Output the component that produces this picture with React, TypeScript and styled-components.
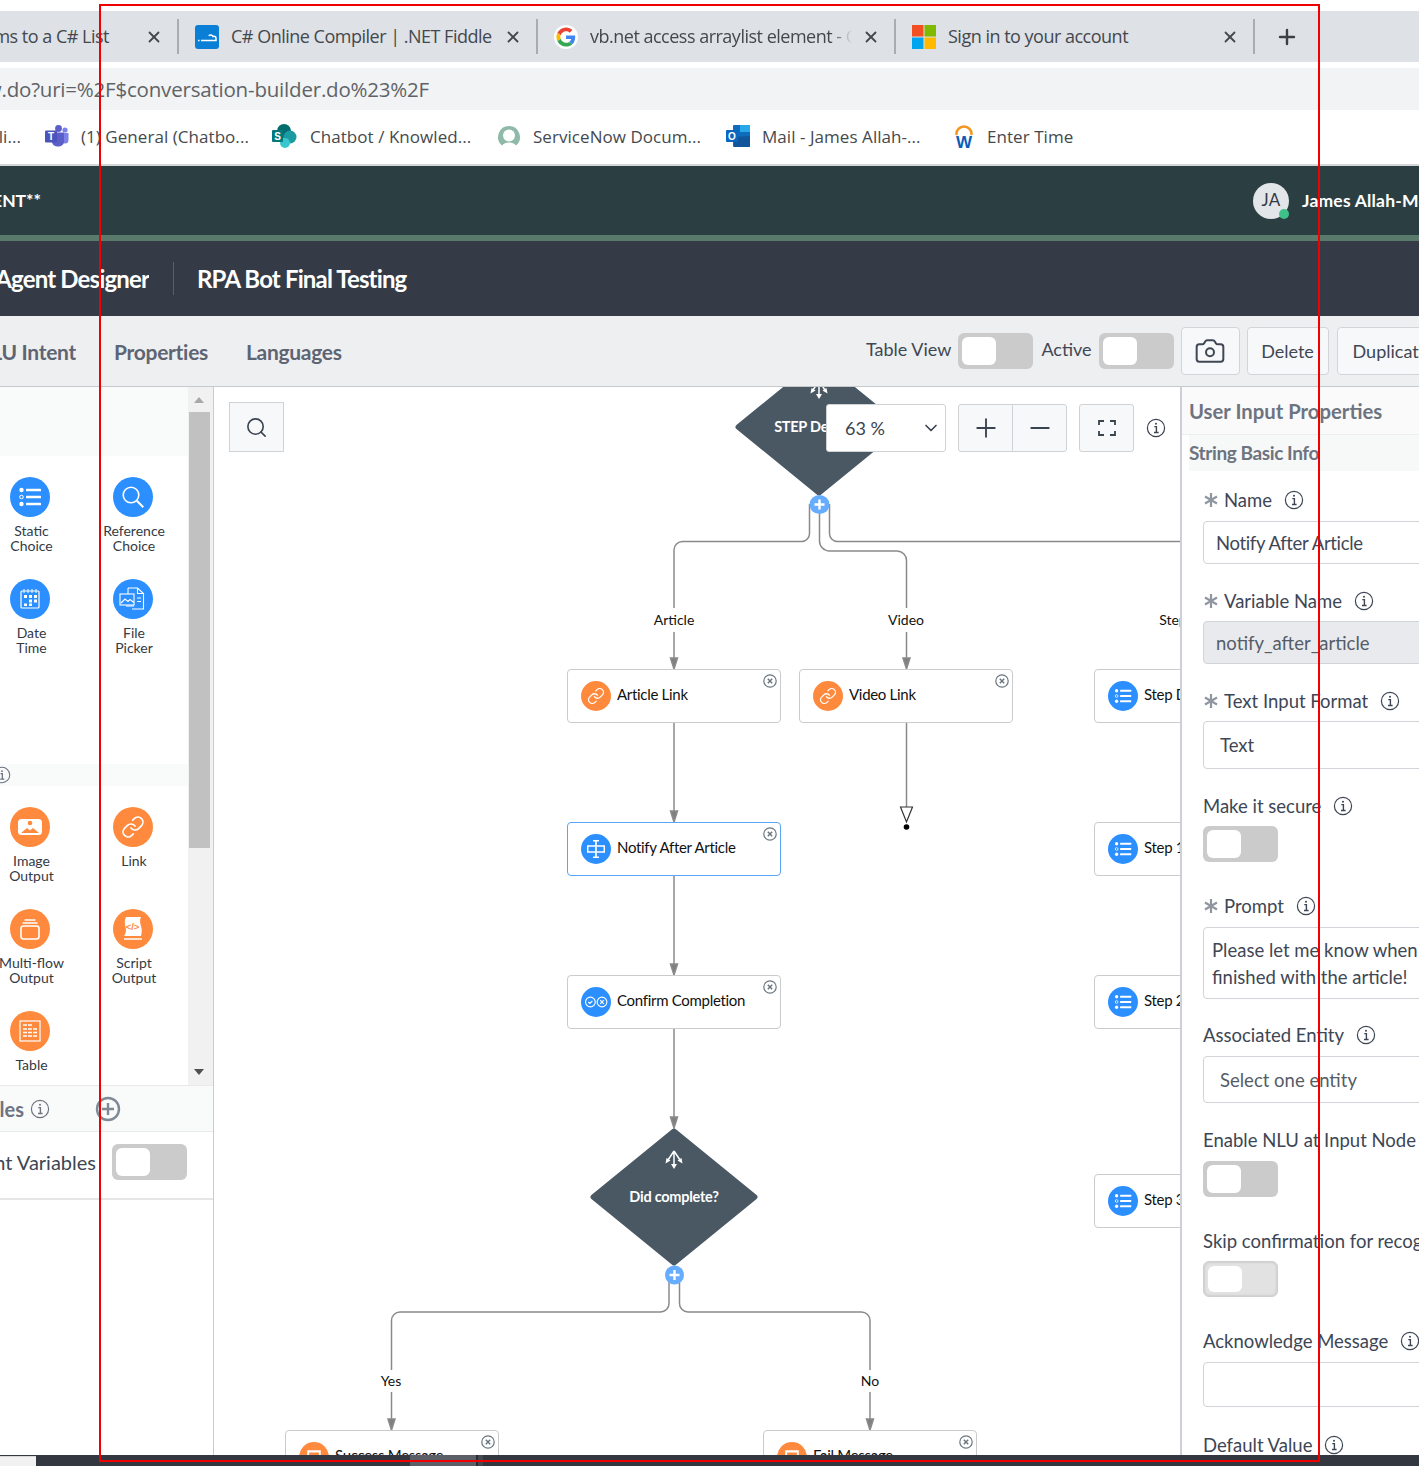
import React from "react";
import styled, { createGlobalStyle } from "styled-components";
import { X, Plus, Minus, Camera, Search, ChevronDown } from "lucide-react";

const GlobalStyle = createGlobalStyle`
  html, body { margin: 0; padding: 0; background: #fff; }
  body { font-family: "Lato", "Noto Sans", sans-serif; }
  * { box-sizing: border-box; }
`;

const Page = styled.div`
  position: relative;
  width: 1419px;
  height: 1466px;
  overflow: hidden;
  display: flex;
  flex-direction: column;
  background: #fff;
  padding-top: 11px;
`;

const RedFrame = styled.div`
  position: absolute;
  left: 99px;
  top: 4px;
  width: 1221px;
  height: 1458px;
  border: 2px solid #f00000;
  z-index: 50;
  pointer-events: none;
`;

/* ---------- browser chrome ---------- */
const TabBar = styled.div`
  display: flex;
  height: 51px;
  flex: none;
  background: #dee1e6;
  align-items: center;
  font-family: "Open Sans", "Noto Sans", sans-serif;
  font-size: 18px;
  color: #44484d;
`;
const Tab = styled.div<{ $w: number }>`
  flex: none;
  width: ${(p) => p.$w}px;
  height: 35px;
  display: flex;
  align-items: center;
  gap: 12px;
  padding: 0 14px 0 16px;
  border-right: 2px solid #a9adb2;
`;
const TabTitle = styled.span`
  flex: 1;
  min-width: 0;
  overflow: hidden;
  white-space: nowrap;
  letter-spacing: -0.5px;
  margin-top: -1px;
`;
const FadedTabTitle = styled(TabTitle)`
  mask-image: linear-gradient(to right, #000 92%, transparent 100%);
  margin-right: -2px;
`;
const ClippedTabTitle = styled(TabTitle)`
  display: flex;
  justify-content: flex-end;
  margin-left: -16px;
  padding-right: 24px;
`;
const NewTab = styled.div`
  margin-left: 20px;
  display: flex;
  color: #3c4043;
`;
const AddressBar = styled.div`
  flex: none;
  margin-top: 6px;
  height: 42px;
  background: #f1f3f4;
  display: flex;
  align-items: center;
  font-family: "Open Sans", "Noto Sans", sans-serif;
  font-size: 20.5px;
  letter-spacing: -0.2px;
  color: #5f6368;
`;
const AddressText = styled.div`
  width: 429px;
  display: flex;
  justify-content: flex-end;
  overflow: hidden;
  white-space: nowrap;
`;
const Bookmarks = styled.div`
  flex: none;
  height: 54px;
  padding-bottom: 2px;
  display: grid;
  grid-template-columns: 45px 227px 225px 229px 227px 1fr;
  align-items: center;
  font-family: "Open Sans", "Noto Sans", sans-serif;
  font-size: 17px;
  letter-spacing: 0.05px;
  color: #45494e;
  white-space: nowrap;
`;
const BookmarkClip = styled.div`
  width: 21px;
  display: flex;
  justify-content: flex-end;
  overflow: hidden;
`;
const Bookmark = styled.div`
  display: flex;
  align-items: center;
  gap: 12px;
`;
const ChromeRule = styled.div`
  flex: none;
  height: 2px;
  background: #d4d6d8;
`;

/* ---------- application header ---------- */
const AppHeader = styled.div`
  flex: none;
  height: 69px;
  background: #2b3f42;
  display: flex;
  align-items: center;
  justify-content: space-between;
  color: #fff;
  font-size: 17.5px;
  font-weight: 700;
  white-space: nowrap;
`;
const HeaderClip = styled.div`
  width: 41px;
  display: flex;
  justify-content: flex-end;
  overflow: hidden;
`;
const UserBlock = styled.div`
  width: 166px;
  display: flex;
  align-items: center;
  gap: 13px;
  letter-spacing: 0.2px;
  overflow: hidden;
`;
const Avatar = styled.div`
  position: relative;
  flex: none;
  width: 36px;
  height: 36px;
  border-radius: 50%;
  background: #e3e6e8;
  color: #333a44;
  font-weight: 400;
  font-size: 17px;
  padding-bottom: 2px;
  display: flex;
  align-items: center;
  justify-content: center;
`;
const StatusDot = styled.span`
  position: absolute;
  right: 0;
  bottom: 0;
  width: 10px;
  height: 10px;
  border-radius: 50%;
  background: #3fc28a;
`;
const GreenRule = styled.div`
  flex: none;
  height: 6px;
  background: #5a7b6b;
`;
const TitleBar = styled.div`
  flex: none;
  height: 75px;
  background: #343b47;
  display: flex;
  align-items: center;
  color: #fff;
  font-size: 24px;
  font-weight: 700;
  letter-spacing: -0.85px;
  white-space: nowrap;
`;
const TitleClip = styled.div`
  width: 149px;
  display: flex;
  justify-content: flex-end;
  overflow: hidden;
`;
const TitleDivider = styled.span`
  width: 1px;
  height: 33px;
  background: #54616c;
  margin: 0 23px 0 24px;
`;

/* ---------- tabs + actions ---------- */
const ToolRow = styled.div`
  flex: none;
  height: 71px;
  background: #eeeff1;
  border-bottom: 1px solid #c6cacd;
  display: flex;
  align-items: center;
  justify-content: space-between;
  white-space: nowrap;
`;
const NavTabs = styled.nav`
  display: flex;
  gap: 38px;
  align-items: center;
  font-size: 21px;
  font-weight: 700;
  letter-spacing: -0.3px;
  color: #5d6573;
`;
const NavClip = styled.div`
  width: 76px;
  display: flex;
  justify-content: flex-end;
  overflow: hidden;
`;
const Actions = styled.div`
  width: 553px;
  flex: none;
  display: flex;
  align-items: center;
  gap: 7px;
  font-size: 18px;
  color: #3f4754;
`;
const ActionLabel = styled.span`
  margin-top: -4px;
`;
const ActiveLabel = styled(ActionLabel)`
  margin-left: 1px;
`;
const Toggle = styled.span<{ $soft?: boolean }>`
  flex: none;
  display: block;
  width: 75px;
  height: 36px;
  border-radius: 6px;
  padding: 4px;
  background: ${(p) => (p.$soft ? "#e2e2e2" : "#cbcbcb")};
  border: ${(p) => (p.$soft ? "1px solid #cfcfcf" : "none")};
  box-shadow: ${(p) => (p.$soft ? "inset 0 0 3px #bbb" : "none")};
  &::before {
    content: "";
    display: block;
    width: 34px;
    height: 100%;
    border-radius: 6px;
    background: #fff;
  }
`;
const ActionButton = styled.button<{ $w: number }>`
  flex: none;
  width: ${(p) => p.$w}px;
  height: 48px;
  background: #f7f8f9;
  border: 1px solid #d2d5d8;
  border-radius: 4px;
  font: inherit;
  color: #3f4754;
  padding: 0;
  display: flex;
  align-items: center;
  justify-content: center;
`;
const DuplicateButton = styled(ActionButton)`
  justify-content: flex-start;
  padding-left: 15px;
  margin-left: 1px;
`;

/* ---------- workspace ---------- */
const Workspace = styled.div`
  flex: none;
  height: 1068px;
  display: grid;
  grid-template-columns: 214px 966px 239px;
  overflow: hidden;
`;
const LeftPanel = styled.aside`
  border-right: 1px solid #c8ccd0;
  display: flex;
  flex-direction: column;
  overflow: hidden;
`;
const Palette = styled.div`
  flex: none;
  height: 698px;
  display: flex;
`;
const PaletteBody = styled.div`
  width: 188px;
  flex: none;
  display: flex;
  flex-direction: column;
  overflow: hidden;
`;
const PaletteTop = styled.div`
  height: 69px;
  flex: none;
  background: #f9fafa;
`;
const PaletteGrid = styled.div<{ $h: number }>`
  flex: none;
  height: ${(p) => p.$h}px;
  width: 206px;
  margin-left: -21px;
  padding-top: 21px;
  display: grid;
  grid-template-columns: 102px 103px;
  grid-auto-rows: 102px;
  align-content: start;
`;
const PaletteDivider = styled.div`
  height: 22px;
  flex: none;
  background: #f9fafa;
  display: flex;
  align-items: center;
  margin-left: -7px;
  color: #6b7280;
`;
const PaletteItem = styled.div`
  display: flex;
  flex-direction: column;
  align-items: center;
  text-align: center;
  font-size: 14px;
  line-height: 15px;
  color: #333a44;
  gap: 6px;
`;
const PaletteText = styled.span`
  padding-left: 3px;
`;
const IconDisc = styled.span<{ $size: number; $color: string }>`
  flex: none;
  display: block;
  width: ${(p) => p.$size}px;
  height: ${(p) => p.$size}px;
  border-radius: 50%;
  background: ${(p) => p.$color};
  & > svg {
    display: block;
    width: 100%;
    height: 100%;
  }
`;
const Scrollbar = styled.div`
  width: 25px;
  flex: none;
  background: #f1f1f1;
  padding-right: 3px;
  display: flex;
  flex-direction: column;
  align-items: center;
  position: relative;
`;
const ScrollUp = styled.span`
  flex: none;
  height: 25px;
  display: flex;
  align-items: center;
  &::before {
    content: "";
    border-left: 5px solid transparent;
    border-right: 5px solid transparent;
    border-bottom: 6px solid #a8a8a8;
    margin-top: 1px;
  }
`;
const ScrollThumb = styled.span`
  flex: none;
  width: 21px;
  height: 436px;
  background: #c1c1c1;
`;
const ScrollDown = styled.span`
  flex: none;
  margin-top: auto;
  height: 27px;
  display: flex;
  align-items: center;
  &::before {
    content: "";
    border-left: 5px solid transparent;
    border-right: 5px solid transparent;
    border-top: 6px solid #505050;
  }
`;
const VarHeader = styled.div`
  flex: none;
  height: 47px;
  background: #f9fafa;
  border-top: 1px solid #e9e9e9;
  border-bottom: 1px solid #e9e9e9;
  display: flex;
  align-items: center;
  font-size: 20px;
  font-weight: 700;
  color: #6d7480;
  white-space: nowrap;
`;
const VarClip = styled.div`
  width: 24px;
  display: flex;
  justify-content: flex-end;
  overflow: hidden;
  margin-right: 6px;
`;
const AddVar = styled.span`
  display: flex;
  margin-left: 45px;
  color: #7f8a95;
`;
const VarRow = styled.div`
  flex: none;
  height: 68px;
  padding: 0 26px 6px 0;
  border-bottom: 2px solid #e6e6e6;
  display: flex;
  align-items: center;
  justify-content: space-between;
  font-size: 20px;
  color: #3d4654;
  white-space: nowrap;
`;
const VarRowClip = styled.div`
  width: 96px;
  display: flex;
  justify-content: flex-end;
  overflow: hidden;
`;

/* ---------- diagram ---------- */
const Canvas = styled.div`
  position: relative;
  overflow: hidden;
  background: #fff;
`;
const Wires = styled.svg`
  position: absolute;
  inset: 0;
  width: 966px;
  height: 1068px;
`;
const FlowNode = styled.div<{ $x: number; $y: number; $active?: boolean }>`
  position: absolute;
  left: ${(p) => p.$x - 214}px;
  top: ${(p) => p.$y - 387}px;
  width: 214px;
  height: 54px;
  background: #fff;
  border: 1px solid ${(p) => (p.$active ? "#5aa5f5" : "#c9cbcd")};
  border-radius: 4px;
  display: flex;
  align-items: center;
  gap: 6px;
  padding: 0 0 0 13px;
  font-size: 15px;
  color: #111;
  white-space: nowrap;
  letter-spacing: -0.3px;
`;
const NodeText = styled.span`
  margin-top: -5px;
`;
const NodeClose = styled.span`
  position: absolute;
  top: 4px;
  right: 3px;
  display: flex;
`;
const DiamondNode = styled.div<{ $x: number; $y: number }>`
  position: absolute;
  left: ${(p) => p.$x - 214}px;
  top: ${(p) => p.$y - 387}px;
  width: 168px;
  height: 138px;
  display: flex;
  align-items: center;
  justify-content: center;
  color: #fff;
  font-size: 14.5px;
  font-weight: 700;
  letter-spacing: -0.25px;
  white-space: nowrap;
`;
const DiamondShape = styled.svg`
  position: absolute;
  inset: 0;
  width: 168px;
  height: 138px;
`;
const DiamondLabel = styled.span`
  position: relative;
  margin-top: -2px;
`;
const EdgeLabel = styled.span<{ $x: number; $y: number }>`
  position: absolute;
  left: ${(p) => p.$x - 214}px;
  top: ${(p) => p.$y - 388}px;
  transform: translate(-50%, -50%);
  font-size: 14px;
  color: #111;
  white-space: nowrap;
`;
const CanvasButton = styled.div<{ $x: number; $y: number; $w: number }>`
  position: absolute;
  left: ${(p) => p.$x - 214}px;
  top: ${(p) => p.$y - 387}px;
  width: ${(p) => p.$w}px;
  height: 48px;
  background: #f7f8f9;
  border: 1px solid #cfd3d6;
  border-radius: 3px;
  display: flex;
  align-items: center;
  justify-content: center;
  color: #3a4350;
`;
const SearchBox = styled(CanvasButton)`
  height: 50px;
  border-radius: 0;
`;
const ZoomSelect = styled(CanvasButton)`
  background: #fff;
  justify-content: space-between;
  padding: 0 4px 0 18px;
  font-size: 18px;
`;
const ZoomPart = styled.span`
  flex: 1;
  height: 100%;
  display: flex;
  align-items: center;
  justify-content: center;
  & + & {
    border-left: 1px solid #cfd3d6;
  }
`;
const InfoSpot = styled.span<{ $x: number; $y: number }>`
  position: absolute;
  left: ${(p) => p.$x - 214}px;
  top: ${(p) => p.$y - 387}px;
  display: flex;
  color: #3a4350;
`;

/* ---------- right panel ---------- */
const RightPanel = styled.aside`
  border-left: 2px solid #cdd1d6;
  overflow: hidden;
  white-space: nowrap;
`;
const PanelHead = styled.div`
  height: 48px;
  background: #fafafa;
  border-bottom: 1px solid #eeeeee;
  display: flex;
  align-items: center;
  padding-left: 7px;
  font-size: 20.3px;
  font-weight: 700;
  color: #6d7480;
`;
const PanelSection = styled.div`
  height: 36px;
  margin-left: 7px;
  background: #f7f8f8;
  display: flex;
  align-items: center;
  font-size: 19px;
  font-weight: 700;
  letter-spacing: -0.4px;
  color: #6d7480;
  padding-bottom: 2px;
`;
const Fields = styled.div`
  padding: 17px 0 0 21px;
`;
const Field = styled.div<{ $after: number; $gap?: number }>`
  display: flex;
  flex-direction: column;
  gap: ${(p) => p.$gap ?? 8}px;
  margin-bottom: ${(p) => p.$after}px;
`;
const FieldLabel = styled.label`
  height: 24px;
  display: flex;
  align-items: center;
  gap: 5px;
  font-size: 18.5px;
  color: #3d4654;
`;
const FieldInfo = styled.span`
  display: flex;
  margin-left: 7px;
  color: #3d4654;
`;
const Required = styled.span`
  display: flex;
  color: #8f96a0;
`;
const TextBox = styled.div<{ $h?: number; $fill?: boolean; $pad?: number; $track?: number }>`
  width: 260px;
  height: ${(p) => p.$h ?? 43}px;
  background: ${(p) => (p.$fill ? "#e8eaed" : "#fff")};
  border: 1px solid #d1d4d8;
  border-radius: 4px;
  display: flex;
  align-items: center;
  padding-left: ${(p) => p.$pad ?? 12}px;
  font-size: 18.5px;
  letter-spacing: ${(p) => p.$track ?? 0}px;
  color: #3f4754;
`;
const MutedBox = styled(TextBox)`
  color: #555c66;
`;
const PromptBox = styled.div`
  width: 260px;
  height: 72px;
  border: 1px solid #d1d4d8;
  border-radius: 4px;
  padding: 9px 0 0 8px;
  font-size: 18.5px;
  line-height: 27px;
  color: #3f4754;
  white-space: nowrap;
`;

const BottomBar = styled.div`
  flex: none;
  height: 11px;
  background: #33373f;
  display: flex;
`;
const BottomStart = styled.span`
  width: 36px;
  margin-top: 1px;
  background: #f1f1f1;
  border-top: 1px solid #d8d8d8;
`;
const BottomBlock = styled.span`
  margin-left: 374px;
  width: 66px;
  background: #5c5f66;
`;
const BottomNotch = styled.span`
  width: 7px;
  background: #45484f;
  border-left: 2px solid #2a2c31;
`;

/* ---------- icons ---------- */
const Info = ({ size = 20 }: { size?: number }) => (
  <svg width={size} height={size} viewBox="0 0 20 20" fill="none" stroke="currentColor">
    <circle cx="10" cy="10" r="8.6" strokeWidth="1.2" />
    <path d="M8.3 8.6H10.4V14.3M8 14.5H12.6" strokeWidth="1.4" />
    <circle cx="10" cy="5.8" r="1" fill="currentColor" stroke="none" />
  </svg>
);
const Fiddle = () => (
  <svg width="24" height="24" viewBox="0 0 24 24">
    <rect width="24" height="24" rx="3" fill="#0a7fd6" />
    <path d="M3 15.5h1.5M6 15.5h15v-2.6c0-1.4-2-2-3-1.4-.6-1.6-3-2.2-4.2-.6" fill="none" stroke="#fff" strokeWidth="1.5" />
  </svg>
);
const GoogleG = () => (
  <svg width="24" height="24" viewBox="-6 -6 60 60">
    <circle cx="24" cy="24" r="30" fill="#fff" />
    <path fill="#EA4335" d="M24 9.5c3.54 0 6.71 1.22 9.21 3.6l6.85-6.85C35.9 2.38 30.47 0 24 0 14.62 0 6.51 5.38 2.56 13.22l7.98 6.19C12.43 13.72 17.74 9.5 24 9.5z" />
    <path fill="#4285F4" d="M46.98 24.55c0-1.57-.15-3.09-.38-4.55H24v9.02h12.94c-.58 2.96-2.26 5.48-4.78 7.18l7.73 6c4.51-4.18 7.09-10.36 7.09-17.65z" />
    <path fill="#FBBC05" d="M10.53 28.59c-.48-1.45-.76-2.99-.76-4.59s.27-3.14.76-4.59l-7.98-6.19C.92 16.46 0 20.12 0 24c0 3.88.92 7.54 2.56 10.78l7.97-6.19z" />
    <path fill="#34A853" d="M24 48c6.48 0 11.93-2.13 15.89-5.81l-7.73-6c-2.15 1.45-4.92 2.3-8.16 2.3-6.26 0-11.57-4.22-13.47-9.91l-7.98 6.19C6.51 42.62 14.62 48 24 48z" />
  </svg>
);
const Microsoft = () => (
  <svg width="24" height="24" viewBox="0 0 24 24">
    <rect width="11.5" height="11.5" fill="#f25022" />
    <rect x="12.5" width="11.5" height="11.5" fill="#7fba00" />
    <rect y="12.5" width="11.5" height="11.5" fill="#00a4ef" />
    <rect x="12.5" y="12.5" width="11.5" height="11.5" fill="#ffb900" />
  </svg>
);
const Teams = () => (
  <svg width="24" height="24" viewBox="0 0 24 24">
    <circle cx="20" cy="6" r="2.6" fill="#7b83eb" />
    <circle cx="13.5" cy="4.5" r="3.4" fill="#5b5fc7" />
    <path d="M16.5 9h7v7a3.5 3.5 0 0 1-7 0z" fill="#7b83eb" />
    <path d="M7 8.5h12v9a5 5 0 0 1-5 5h-2a5 5 0 0 1-5-5z" fill="#5b5fc7" />
    <rect y="6.5" width="12" height="12" rx="1.2" fill="#4b53bc" />
    <text x="6" y="16" textAnchor="middle" fontSize="10" fontWeight="700" fill="#fff" fontFamily="Liberation Sans, sans-serif">T</text>
  </svg>
);
const SharePoint = () => (
  <svg width="26" height="24" viewBox="0 0 26 24">
    <circle cx="12" cy="7" r="7" fill="#036c70" />
    <circle cx="18" cy="13" r="6.5" fill="#1a9ba1" />
    <circle cx="13" cy="19" r="5" fill="#37c6d0" />
    <rect y="6" width="11" height="12" rx="1" fill="#03787c" />
    <text x="5.5" y="15.5" textAnchor="middle" fontSize="10" fontWeight="700" fill="#fff" fontFamily="Liberation Sans, sans-serif">S</text>
  </svg>
);
const ServiceNow = () => (
  <svg width="24" height="24" viewBox="0 0 24 24">
    <path d="M12 2a11 11 0 0 0-7 19.4c1-1.2 3-3 7-3s6 1.8 7 3A11 11 0 0 0 12 2z" fill="#8fb9a8" />
    <circle cx="12" cy="11.5" r="6" fill="#fff" />
  </svg>
);
const Outlook = () => (
  <svg width="24" height="24" viewBox="0 0 24 24">
    <rect x="7" y="1" width="17" height="22" rx="1" fill="#0f6cbd" />
    <rect x="14" y="1" width="10" height="7" fill="#28a8ea" />
    <path d="M8 13l16-1v11H8z" fill="#14447d" opacity=".55" />
    <rect y="6" width="12" height="12" rx="1" fill="#0a67c0" />
    <text x="6" y="15.8" textAnchor="middle" fontSize="10" fontWeight="700" fill="#fff" fontFamily="Liberation Sans, sans-serif">O</text>
  </svg>
);
const Workday = () => (
  <svg width="22" height="26" viewBox="0 0 22 26">
    <path d="M3.5 11a7.5 7.5 0 0 1 15 0" fill="none" stroke="#f5941e" strokeWidth="2.6" strokeLinecap="round" />
    <text x="11" y="25" textAnchor="middle" fontSize="17" fontWeight="700" fill="#0b5cb8" fontFamily="Liberation Sans, sans-serif">W</text>
  </svg>
);

const G = { fill: "none", stroke: "#fff", strokeWidth: 1.6 };
const glyphs: Record<string, React.ReactNode> = {
  list: (
    <g fill="#fff">
      <circle cx="11.5" cy="13" r="2.2" />
      <circle cx="11.5" cy="20" r="1.8" fill="none" stroke="#fff" strokeWidth="1" />
      <circle cx="11.5" cy="27" r="2.2" />
      <rect x="16" y="11.7" width="15" height="2.6" rx=".6" />
      <rect x="16" y="18.7" width="15" height="2.6" rx=".6" />
      <rect x="16" y="25.7" width="15" height="2.6" rx=".6" />
    </g>
  ),
  search: (
    <g {...G}>
      <circle cx="18" cy="18" r="7.8" />
      <path d="M23.8 23.8l6.5 6.5" strokeWidth="2" />
    </g>
  ),
  calendar: (
    <g>
      <rect x="11" y="12" width="18" height="17" rx="1" {...G} strokeWidth={1.2} />
      <path d="M14 10v4M18 10v4M22 10v4M26 10v4" {...G} strokeWidth={1} />
      <path d="M14 16h3v3h-3zM19 16h3v3h-3zM24 16h3v3h-3zM19 20.5h3v3h-3zM24 20.5h3v3h-3zM14 24.5h3v2.5h-3zM19 24.5h3v2.5h-3z" fill="#fff" />
    </g>
  ),
  file: (
    <g {...G} strokeWidth={1.1}>
      <path d="M15 9h9.5l6 5.5V30H19M15 9v6" />
      <path d="M24.5 9v5.5h6" />
      <rect x="7" y="15" width="14" height="11" />
      <path d="M8 24l4-4 3 2.5 2-2 4 3M24 19h4M24 22.5h4M21 27h-8" />
    </g>
  ),
  image: (
    <g>
      <rect x="8" y="12" width="24" height="16" rx="3.5" fill="#fff" />
      <circle cx="20" cy="16" r="2.3" fill="#ff8a3d" />
      <path d="M11 26l6-5 3 2.4 3-2.4 6 5z" fill="#ff8a3d" />
    </g>
  ),
  link: (
    <g transform="translate(8 8)" fill="none" stroke="#fff" strokeWidth="1.7" strokeLinecap="round">
      <path d="M10 13a5 5 0 0 0 7.54.54l3-3a5 5 0 0 0-7.07-7.07l-1.72 1.71" />
      <path d="M14 11a5 5 0 0 0-7.54-.54l-3 3a5 5 0 0 0 7.07 7.07l1.71-1.71" />
    </g>
  ),
  flow: (
    <g {...G}>
      <rect x="11" y="17" width="18" height="13" rx="2.5" />
      <path d="M12.5 14h15M14.5 11h11" />
    </g>
  ),
  script: (
    <g>
      <path d="M13 8h15c-1.5 3-1 6 0 9s1 6 0 10H11c2-3 2.5-6 1.5-9S11.5 11 13 8z" fill="#fff" />
      <path d="M11 30h18" stroke="#fff" strokeWidth="1.5" />
      <text x="19.5" y="21" textAnchor="middle" fontSize="9.5" fontWeight="700" fill="#ff8a3d" fontFamily="Liberation Sans, sans-serif">&lt;/&gt;</text>
    </g>
  ),
  table: (
    <g>
      <rect x="10" y="10" width="20" height="20" {...G} strokeWidth={1.2} />
      <path d="M13 14h9M13 18h14M13 21.5h14M13 25h14" {...G} strokeWidth={1.6} strokeDasharray="4 1" />
    </g>
  ),
  notify: (
    <g {...G} strokeWidth={2.2}>
      <path d="M20 16H9v8h11M21 16h10v8H21" strokeWidth={2} />
      <path d="M20 9v22M16 9h8M16 31h8" />
    </g>
  ),
  confirm: (
    <g {...G} strokeWidth={1.5}>
      <circle cx="12.5" cy="20" r="6.5" />
      <circle cx="28" cy="20" r="6.5" />
      <path d="M9.8 20l2 2 3.4-3.6M25.6 17.6l4.8 4.8M30.4 17.6l-4.8 4.8" />
    </g>
  ),
  message: (
    <g>
      <rect x="11" y="11" width="18" height="18" fill="#fff" />
      <rect x="13.5" y="14" width="13" height="9" fill="#ff8a3d" />
    </g>
  ),
};
const BLUE = "#2b8fff";
const ORANGE = "#ff8a3d";
const Disc = ({ kind, color, size = 40 }: { kind: string; color: string; size?: number }) => (
  <IconDisc $size={size} $color={color}>
    <svg viewBox="0 0 40 40">{glyphs[kind]}</svg>
  </IconDisc>
);

const CloseDot = () => (
  <NodeClose>
    <svg width="14" height="14" viewBox="0 0 14 14" fill="none" stroke="#6b7680">
      <circle cx="7" cy="7" r="6.2" strokeWidth="1.2" />
      <path d="M4.8 4.8l4.4 4.4M9.2 4.8l-4.4 4.4" strokeWidth="1.5" />
    </svg>
  </NodeClose>
);
const SplitIcon = () => (
  <svg x="75" y="21" width="18" height="20" viewBox="0 0 18 20" fill="none" stroke="#fff" strokeWidth="1.5">
    <path d="M9 2v14M9 2L3 11M9 2l6 9" />
    <path d="M6 15l3 5 3-5zM.5 14.5L1.5 9l4 2.5zM17.5 14.5L16.5 9l-4 2.5z" fill="#fff" stroke="none" />
  </svg>
);
const Diamond = () => (
  <DiamondShape viewBox="0 0 168 138">
    <polygon points="84,3 165,69 84,135 3,69" fill="#4a5864" stroke="#4a5864" strokeWidth="5" strokeLinejoin="round" />
    <SplitIcon />
  </DiamondShape>
);
const Arrow = ({ x, y }: { x: number; y: number }) => (
  <path d={`M${x} ${y}l-3.5-11h7z`} fill="#808080" />
);
const Corners = () => (
  <svg width="20" height="18" viewBox="0 0 20 18" fill="none" stroke="currentColor" strokeWidth="1.8">
    <path d="M2 6V2h5M13 2h5v4M18 12v4h-5M7 16H2v-4" />
  </svg>
);
const Star = () => (
  <Required>
    <svg width="16" height="16" viewBox="0 0 16 16" fill="none" stroke="currentColor" strokeWidth="2.2">
      <path d="M8 1v14M2 4.5l12 7M14 4.5l-12 7" />
    </svg>
  </Required>
);

const Node = ({ x, y, kind, color, text, active }: { x: number; y: number; kind: string; color: string; text: string; active?: boolean }) => (
  <FlowNode $x={x} $y={y} $active={active}>
    <Disc kind={kind} color={color} size={30} />
    <NodeText>{text}</NodeText>
    <CloseDot />
  </FlowNode>
);

export default function App() {
  return (
    <Page>
      <GlobalStyle />
      <TabBar>
        <Tab $w={179}>
          <ClippedTabTitle>Add Items to a C# List</ClippedTabTitle>
          <X size={18} strokeWidth={2.4} />
        </Tab>
        <Tab $w={359}>
          <Fiddle />
          <TabTitle>C# Online Compiler | .NET Fiddle</TabTitle>
          <X size={18} strokeWidth={2.4} />
        </Tab>
        <Tab $w={358}>
          <GoogleG />
          <FadedTabTitle>vb.net access arraylist element - C# Corner</FadedTabTitle>
          <X size={18} strokeWidth={2.4} />
        </Tab>
        <Tab $w={359}>
          <Microsoft />
          <TabTitle>Sign in to your account</TabTitle>
          <X size={18} strokeWidth={2.4} />
        </Tab>
        <NewTab>
          <Plus size={24} strokeWidth={2.4} />
        </NewTab>
      </TabBar>
      <AddressBar>
        <AddressText>now.do?uri=%2F$conversation-builder.do%23%2F</AddressText>
      </AddressBar>
      <Bookmarks>
        <BookmarkClip>Visuali...</BookmarkClip>
        <Bookmark><Teams />(1) General (Chatbo...</Bookmark>
        <Bookmark><SharePoint />Chatbot / Knowled...</Bookmark>
        <Bookmark><ServiceNow />ServiceNow Docum...</Bookmark>
        <Bookmark><Outlook />Mail - James Allah-...</Bookmark>
        <Bookmark><Workday />Enter Time</Bookmark>
      </Bookmarks>
      <ChromeRule />

      <AppHeader>
        <HeaderClip>DEVELOPMENT**</HeaderClip>
        <UserBlock>
          <Avatar>JA<StatusDot /></Avatar>
          James Allah-Mensah
        </UserBlock>
      </AppHeader>
      <GreenRule />
      <TitleBar>
        <TitleClip>Virtual Agent Designer</TitleClip>
        <TitleDivider />
        RPA Bot Final Testing
      </TitleBar>

      <ToolRow>
        <NavTabs>
          <NavClip>NLU Intent</NavClip>
          <span>Properties</span>
          <span>Languages</span>
        </NavTabs>
        <Actions>
          <ActionLabel>Table View</ActionLabel>
          <Toggle />
          <ActiveLabel>Active</ActiveLabel>
          <Toggle />
          <ActionButton $w={59}><Camera size={32} strokeWidth={1.5} /></ActionButton>
          <ActionButton $w={82}>Delete</ActionButton>
          <DuplicateButton $w={120}>Duplicate</DuplicateButton>
        </Actions>
      </ToolRow>

      <Workspace>
        <LeftPanel>
          <Palette>
            <PaletteBody>
              <PaletteTop />
              <PaletteGrid $h={308}>
                <PaletteItem><Disc kind="list" color={BLUE} /><PaletteText>Static<br />Choice</PaletteText></PaletteItem>
                <PaletteItem><Disc kind="search" color={BLUE} /><PaletteText>Reference<br />Choice</PaletteText></PaletteItem>
                <PaletteItem><Disc kind="calendar" color={BLUE} /><PaletteText>Date<br />Time</PaletteText></PaletteItem>
                <PaletteItem><Disc kind="file" color={BLUE} /><PaletteText>File<br />Picker</PaletteText></PaletteItem>
              </PaletteGrid>
              <PaletteDivider><Info size={18} /></PaletteDivider>
              <PaletteGrid $h={299}>
                <PaletteItem><Disc kind="image" color={ORANGE} /><PaletteText>Image<br />Output</PaletteText></PaletteItem>
                <PaletteItem><Disc kind="link" color={ORANGE} /><PaletteText>Link</PaletteText></PaletteItem>
                <PaletteItem><Disc kind="flow" color={ORANGE} /><PaletteText>Multi-flow<br />Output</PaletteText></PaletteItem>
                <PaletteItem><Disc kind="script" color={ORANGE} /><PaletteText>Script<br />Output</PaletteText></PaletteItem>
                <PaletteItem><Disc kind="table" color={ORANGE} /><PaletteText>Table</PaletteText></PaletteItem>
              </PaletteGrid>
            </PaletteBody>
            <Scrollbar>
              <ScrollUp />
              <ScrollThumb />
              <ScrollDown />
            </Scrollbar>
          </Palette>
          <VarHeader>
            <VarClip>Variables</VarClip>
            <Info size={20} />
            <AddVar>
              <svg width="26" height="26" viewBox="0 0 26 26" fill="none" stroke="currentColor" strokeWidth="2.4">
                <circle cx="13" cy="13" r="11" />
                <path d="M13 7v12M7 13h12" />
              </svg>
            </AddVar>
          </VarHeader>
          <VarRow>
            <VarRowClip>Agent Variables</VarRowClip>
            <Toggle />
          </VarRow>
        </LeftPanel>

        <Canvas>
          <Wires viewBox="214 387 966 1068" fill="none" stroke="#8a8a8a" strokeWidth="1.5">
            <path d="M809.5 504V533a8 8 0 0 1-8 8.5H682.5a8.5 8.5 0 0 0-8.5 8.5V608M674 632V660" />
            <path d="M819.5 504V541a10 10 0 0 0 10 10H897a9.5 9.5 0 0 1 9.5 9.5V608M906.5 632V660" />
            <path d="M829.5 504V533a8 8 0 0 0 8 8.5H1180" />
            <path d="M674 723V813M674 876V966M674 1028V1119M906.5 723V807" />
            <path d="M669 1275V1303a8.5 8.5 0 0 1-8.5 9H400a8.5 8.5 0 0 0-8.5 8.5V1370M391.5 1392V1421" />
            <path d="M679.5 1275V1303a8.5 8.5 0 0 0 8.5 9H861.5a8.5 8.5 0 0 1 8.5 8.5V1370M870 1392V1421" />
            <Arrow x={674} y={669} />
            <Arrow x={906.5} y={669} />
            <Arrow x={674} y={822} />
            <Arrow x={674} y={975} />
            <Arrow x={674} y={1128} />
            <Arrow x={391.5} y={1430} />
            <Arrow x={870} y={1430} />
            <path d="M900.5 807h12l-6 15z" fill="#fff" stroke="#333" strokeWidth="1.2" />
            <circle cx="906.5" cy="827" r="2.8" fill="#000" stroke="none" />
          </Wires>

          <DiamondNode $x={735} $y={358}>
            <Diamond />
            <DiamondLabel>STEP Decision</DiamondLabel>
          </DiamondNode>
          <DiamondNode $x={590} $y={1128}>
            <Diamond />
            <DiamondLabel>Did complete?</DiamondLabel>
          </DiamondNode>

          <Wires viewBox="214 387 966 1068" fill="none">
            <ellipse cx="819.5" cy="504.5" rx="10" ry="9.5" fill="#66adff" />
            <path d="M819.5 499.5v10M814.5 504.5h10" stroke="#fff" strokeWidth="2.4" />
            <ellipse cx="674.5" cy="1275" rx="9.5" ry="9.5" fill="#66adff" />
            <path d="M674.5 1270v10M669.5 1275h10" stroke="#fff" strokeWidth="2.4" />
          </Wires>

          <EdgeLabel $x={674} $y={620}>Article</EdgeLabel>
          <EdgeLabel $x={906} $y={620}>Video</EdgeLabel>
          <EdgeLabel $x={1196} $y={620}>Step Details</EdgeLabel>
          <EdgeLabel $x={391} $y={1381}>Yes</EdgeLabel>
          <EdgeLabel $x={870} $y={1381}>No</EdgeLabel>

          <Node x={567} y={669} kind="link" color={ORANGE} text="Article Link" />
          <Node x={799} y={669} kind="link" color={ORANGE} text="Video Link" />
          <Node x={1094} y={669} kind="list" color={BLUE} text="Step Details" />
          <Node x={567} y={822} kind="notify" color={BLUE} text="Notify After Article" active />
          <Node x={1094} y={822} kind="list" color={BLUE} text="Step 1 Details" />
          <Node x={567} y={975} kind="confirm" color={BLUE} text="Confirm Completion" />
          <Node x={1094} y={975} kind="list" color={BLUE} text="Step 2 Details" />
          <Node x={1094} y={1174} kind="list" color={BLUE} text="Step 3 Details" />
          <Node x={285} y={1430} kind="message" color={ORANGE} text="Success Message" />
          <Node x={763} y={1430} kind="message" color={ORANGE} text="Fail Message" />

          <SearchBox $x={229} $y={402} $w={55}><Search size={23} strokeWidth={1.7} /></SearchBox>
          <ZoomSelect $x={826} $y={404} $w={120}>
            63 %
            <ChevronDown size={20} strokeWidth={2} />
          </ZoomSelect>
          <CanvasButton $x={958} $y={404} $w={109}>
            <ZoomPart><Plus size={30} strokeWidth={1.5} /></ZoomPart>
            <ZoomPart><Minus size={30} strokeWidth={1.5} /></ZoomPart>
          </CanvasButton>
          <CanvasButton $x={1079} $y={404} $w={55}><Corners /></CanvasButton>
          <InfoSpot $x={1146} $y={418}><Info size={20} /></InfoSpot>
        </Canvas>

        <RightPanel>
          <PanelHead>User Input Properties</PanelHead>
          <PanelSection>String Basic Info</PanelSection>
          <Fields>
            <Field $after={25} $gap={9}>
              <FieldLabel><Star />Name<FieldInfo><Info /></FieldInfo></FieldLabel>
              <TextBox $track={-0.35}>Notify After Article</TextBox>
            </Field>
            <Field $after={25}>
              <FieldLabel><Star />Variable Name<FieldInfo><Info /></FieldInfo></FieldLabel>
              <MutedBox $fill>notify_after_article</MutedBox>
            </Field>
            <Field $after={25}>
              <FieldLabel><Star />Text Input Format<FieldInfo><Info /></FieldInfo></FieldLabel>
              <TextBox $h={48} $pad={16}>Text</TextBox>
            </Field>
            <Field $after={32}>
              <FieldLabel>Make it secure<FieldInfo><Info /></FieldInfo></FieldLabel>
              <Toggle />
            </Field>
            <Field $after={24} $gap={9}>
              <FieldLabel><Star />Prompt<FieldInfo><Info /></FieldInfo></FieldLabel>
              <PromptBox>Please let me know when<br />finished with the article!</PromptBox>
            </Field>
            <Field $after={25} $gap={9}>
              <FieldLabel>Associated Entity<FieldInfo><Info /></FieldInfo></FieldLabel>
              <MutedBox $h={47} $pad={16}>Select one entity</MutedBox>
            </Field>
            <Field $after={32} $gap={9}>
              <FieldLabel>Enable NLU at Input Node</FieldLabel>
              <Toggle />
            </Field>
            <Field $after={32}>
              <FieldLabel>Skip confirmation for recognized input</FieldLabel>
              <Toggle $soft />
            </Field>
            <Field $after={26} $gap={9}>
              <FieldLabel>Acknowledge Message<FieldInfo><Info /></FieldInfo></FieldLabel>
              <TextBox $h={45} />
            </Field>
            <Field $after={0}>
              <FieldLabel>Default Value<FieldInfo><Info /></FieldInfo></FieldLabel>
            </Field>
          </Fields>
        </RightPanel>
      </Workspace>

      <BottomBar>
        <BottomStart />
        <BottomBlock />
        <BottomNotch />
      </BottomBar>
      <RedFrame />
    </Page>
  );
}
